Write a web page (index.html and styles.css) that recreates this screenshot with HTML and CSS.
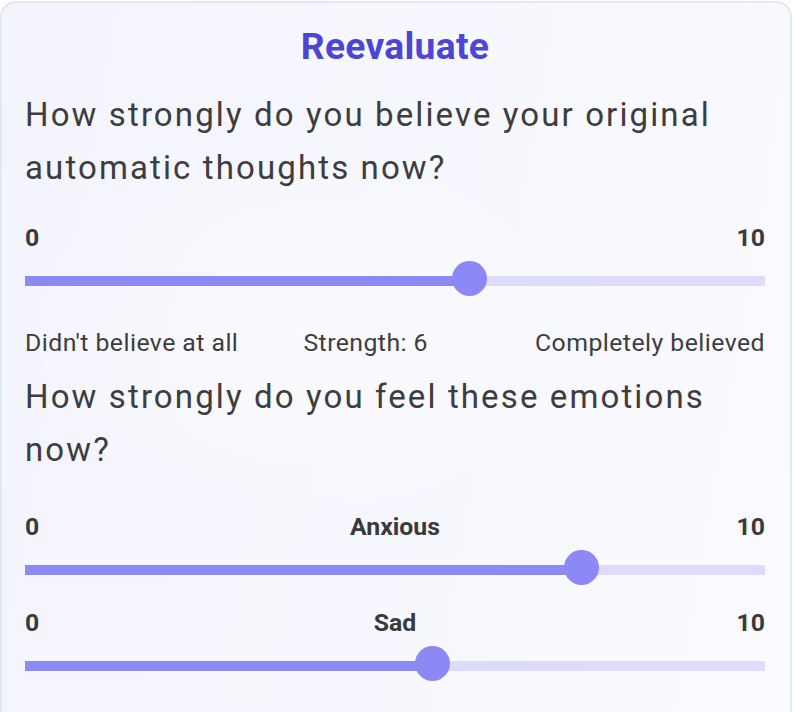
FILE: index.html
```html
<!DOCTYPE html>
<html lang="en">
<head>
<meta charset="utf-8">
<title>Reevaluate</title>
<link rel="stylesheet" href="styles.css">
</head>
<body>
<section class="card">
  <h1 class="title">Reevaluate</h1>

  <p class="question">How strongly do you believe your original automatic thoughts now?</p>
  <div class="scale-row">
    <span class="end start">0</span>
    <span class="mid"></span>
    <span class="end finish">10</span>
  </div>
  <div class="slider">
    <div class="track">
      <div class="fill" style="width:60%"></div>
    </div>
    <div class="thumb" style="left:60%"></div>
  </div>
  <div class="caption-row">
    <span>Didn't believe at all</span>
    <span class="strength">Strength: 6</span>
    <span>Completely believed</span>
  </div>

  <p class="question q2">How strongly do you feel these emotions now?</p>
  <div class="scale-row emo">
    <span class="end start">0</span>
    <span class="mid">Anxious</span>
    <span class="end finish">10</span>
  </div>
  <div class="slider">
    <div class="track">
      <div class="fill" style="width:75.2%"></div>
    </div>
    <div class="thumb" style="left:75.2%"></div>
  </div>
  <div class="scale-row emo second">
    <span class="end start">0</span>
    <span class="mid">Sad</span>
    <span class="end finish">10</span>
  </div>
  <div class="slider">
    <div class="track">
      <div class="fill" style="width:55%"></div>
    </div>
    <div class="thumb" style="left:55%"></div>
  </div>
</section>
</body>
</html>
```

FILE: styles.css
```css
html, body {
  margin: 0;
  padding: 0;
  background: #ffffff;
}

body {
  font-family: Roboto, "Noto Sans", "Liberation Sans", sans-serif;
  color: #3d3d40;
}

.card {
  margin: 1px 2px 0 0;
  border: 2px solid #e2e8f0;
  border-radius: 16px;
  padding: 20px 25px 60px 23px;
  min-height: 700px;
  background:
    radial-gradient(ellipse 420px 300px at 300px 330px, rgba(255,255,255,0.45), rgba(255,255,255,0) 70%),
    linear-gradient(100deg, #f4f4fd 0%, #f7f7fe 55%, #fafaff 100%);
}

.title {
  margin: 0;
  text-align: center;
  font-size: 37.2px;
  line-height: 46px;
  font-weight: 700;
  color: #4c45d6;
  letter-spacing: 0.3px;
}

.question {
  margin: 20px 0 0;
  font-size: 33px;
  line-height: 52.5px;
  font-weight: 400;
  color: #3d3d40;
  letter-spacing: 2.12px;
}

.question.q2 {
  margin-top: 13px;
}

.scale-row {
  display: grid;
  grid-template-columns: 1fr auto 1fr;
  margin-top: 30px;
  font-size: 24.8px;
  line-height: 28px;
  font-weight: 700;
  color: #3a3a3d;
}

.scale-row.emo {
  margin-top: 36.5px;
}

.scale-row.emo.second {
  margin-top: 23px;
}

.scale-row .start {
  justify-self: start;
}

.scale-row .finish {
  justify-self: end;
}

.slider {
  position: relative;
  box-sizing: border-box;
  height: 36px;
  padding-top: 15px;
  margin-top: 9px;
}

.track {
  height: 10px;
  background: #dedcfb;
}

.fill {
  height: 100%;
  background: #8c88f5;
}

.thumb {
  position: absolute;
  top: 0;
  width: 35px;
  height: 35px;
  margin-left: -17.5px;
  border-radius: 50%;
  background: #8c88f5;
}

.caption-row {
  display: flex;
  justify-content: space-between;
  margin-top: 31px;
  font-size: 24.8px;
  line-height: 30px;
  font-weight: 400;
  color: #3d3d40;
  letter-spacing: 0.45px;
}

.caption-row .strength {
  margin-right: 42px;
}
```
